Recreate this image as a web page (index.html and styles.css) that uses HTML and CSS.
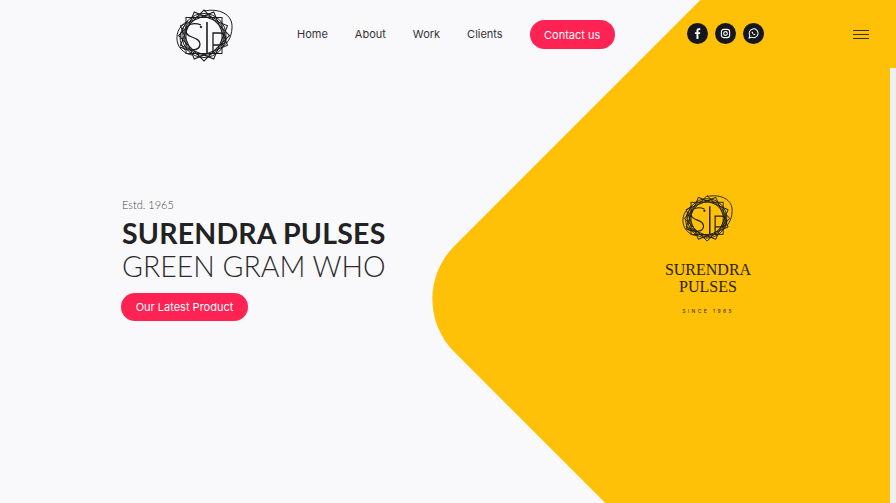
FILE: index.html
```html
<!DOCTYPE html>
<html lang="en">
<head>
   <meta charset="UTF-8">
   <meta name="viewport" content="width=device-width, initial-scale=1.0">
   <title>Surendra Pulses</title>
   <link rel="stylesheet" href="styles.css">
</head>
<body>
   <svg width="0" height="0" class="defs">
      <symbol id="mark" viewBox="0 0 60 56">
         <g fill="none" stroke="#1c1c1c" stroke-width="1">
            <!-- ring of turned squares -->
            <rect x="11" y="11.500" width="36" height="36" transform="rotate(45 29 29.500)"/>
            <rect x="11" y="11.500" width="36" height="36" transform="rotate(22.500 29 29.500)"/>
            <rect x="11" y="11.500" width="36" height="36" transform="rotate(67.500 29 29.500)"/>
            <rect x="11" y="11.500" width="36" height="36"/>
            <circle cx="29" cy="29.500" r="20"/>
            <circle cx="29" cy="29.500" r="22"/>
            <!-- outer swooshes -->
            <path d="M29 5 C44 2 58 8 57 22 C56.500 32 52 38 46 42"/>
            <path d="M13 15 C3 20 0 30 3 38 C5 44 11 48 17 49"/>
            <path d="M10 19 C4 26 3 36 10 44"/>
            <!-- monogram -->
            <path d="M26 19 C19 16 11 18 11 25 C11 33 25 30 25 38 C25 46 12 45 5 41" stroke-width="1.300"/>
            <path d="M32 16 V48" stroke-width="1.600"/>
            <path d="M38 48 V27 h7 a6 6 0 0 1 0 12 h-7" stroke-width="1.300"/>
            <circle cx="26" cy="21" r=".8" fill="#1c1c1c"/>
         </g>
      </symbol>
   </svg>

   <div class="backdrop"><div class="shape"></div></div>
   <div class="scroll-strip"></div>

   <header class="topbar">
      <a class="logo" href="#"><svg width="60" height="56"><use href="#mark"/></svg></a>
      <nav class="menu">
         <a href="#">Home</a>
         <a href="#">About</a>
         <a href="#">Work</a>
         <a href="#">Clients</a>
         <a href="#" class="btn contact">Contact us</a>
      </nav>
      <div class="social">
         <a href="#">
            <svg width="11" height="11" viewBox="0 0 12 12"><path fill="#fff" d="M7 12V6.600h1.700L9 4.500H7V3.300c0-.6.2-1 1-1h1V.4C8.800.3 8.200.3 7.600.3 6 .3 4.900 1.200 4.900 3v1.500H3.200v2.100h1.700V12z"/></svg>
         </a>
         <a href="#">
            <svg width="11" height="11" viewBox="0 0 12 12" fill="none" stroke="#fff" stroke-width="1.200"><rect x="1.500" y="1.500" width="9" height="9" rx="2.500"/><circle cx="6" cy="6" r="2"/></svg>
         </a>
         <a href="#">
            <svg width="11" height="11" viewBox="0 0 12 12" fill="none" stroke="#fff" stroke-width="1.100"><path d="M1.200 10.800l.8-2.700A4.800 4.800 0 1 1 4 10z"/><path d="M4.400 3.800c-.5.5-.5 1.300.2 2.200s1.600 1.700 2.500 1.800c.6 0 1-.4 1.100-.9L7.200 6.300l-.6.5c-.5-.2-1-.8-1.300-1.300l.4-.6z" fill="#fff" stroke="none"/></svg>
         </a>
      </div>
      <button class="burger" aria-label="Menu"><span></span><span></span><span></span></button>
   </header>

   <main class="hero">
      <div class="intro">
         <p class="estd">Estd. 1965</p>
         <h1>SURENDRA PULSES</h1>
         <h2>GREEN GRAM WHO</h2>
         <a href="#" class="btn latest">Our Latest Product</a>
      </div>
      <div class="brand">
         <svg width="54" height="50"><use href="#mark"/></svg>
         <p class="brand-name">SURENDRA<br>PULSES</p>
         <p class="brand-since">SINCE 1965</p>
      </div>
   </main>
</body>
</html>
```

FILE: styles.css
```css
html, body {
   height: 100%;
}

body {
   overflow: hidden;
   margin: 0;
   position: relative;
   background-color: #f9f9fb;
   color: #222;
   font-family: "Inter", "Liberation Sans", sans-serif;
}

a {
   color: inherit;
   text-decoration: none;
}

.defs {
   position: absolute;
}

.backdrop {
   position: absolute;
   inset: 0;
   overflow: hidden;
}

/* big yellow square turned on its corner, sits behind everything */
.shape {
   position: absolute;
   left: 567px;
   top: -101px;
   width: 800px;
   height: 800px;
   border-radius: 75px;
   background-color: #ffc107;
   transform: rotate(45deg);
}

.scroll-strip {
   position: absolute;
   top: 68px;
   right: 0;
   bottom: 0;
   width: 6px;
   background-color: #eeeef3;
}

.topbar {
   position: relative;
   display: flex;
   align-items: center;
   height: 68px;
   padding-left: 175px;
}

.logo {
   display: flex;
   width: 60px;
   margin-right: 62px;
}

.menu {
   display: flex;
   align-items: center;
   width: 390px;
   font-size: 11px;
   color: #333;
}

.menu a {
   margin-right: 27px;
}

.btn {
   display: flex;
   align-items: center;
   justify-content: center;
   border-radius: 20px;
   background-color: #ff2353;
   color: #fff;
}

.menu .contact {
   width: 85px;
   height: 29px;
   margin: 1px 0 0;
   color: #fff;
}

.social {
   display: flex;
   gap: 7px;
   margin-right: 89px;
   margin-top: -1px;
}

.social a {
   display: flex;
   align-items: center;
   justify-content: center;
   width: 21px;
   height: 21px;
   border-radius: 50%;
   background-color: #16171c;
}

.burger {
   display: flex;
   flex-direction: column;
   gap: 3px;
   width: 16px;
   padding: 0;
   border: 0;
   background: none;
}

.burger span {
   height: 1px;
   width: 16px;
   background-color: #3a3014;
}

.hero {
   position: relative;
   display: flex;
   padding-left: 122px;
}

.intro {
   width: 541px;
   padding-top: 130px;
}

.estd {
   margin: 0 0 6px;
   font-family: "Lato", sans-serif;
   font-size: 11px;
   font-weight: 300;
   color: #444;
}

h1, h2 {
   margin: 0;
   font-family: "Lato", sans-serif;
   font-size: 28.500px;
   line-height: 33px;
   white-space: nowrap;
}

h1 {
   font-weight: 700;
   letter-spacing: .2px;
   color: #222;
}

h2 {
   font-weight: 300;
   color: #2a2a2a;
}

.latest {
   width: 127px;
   height: 28px;
   margin-top: 10px;
   margin-left: -1px;
   font-size: 11px;
}

.brand {
   display: flex;
   flex-direction: column;
   align-items: center;
   width: 90px;
   padding-top: 124px;
   color: #2a1c00;
}

.brand-name {
   margin: 19px 0 0;
   font-family: "Liberation Serif", serif;
   font-size: 16px;
   line-height: 17px;
   text-align: center;
   white-space: nowrap;
}

.brand-since {
   margin: 13px 0 0;
   font-size: 5px;
   letter-spacing: 2.400px;
   white-space: nowrap;
}
```
